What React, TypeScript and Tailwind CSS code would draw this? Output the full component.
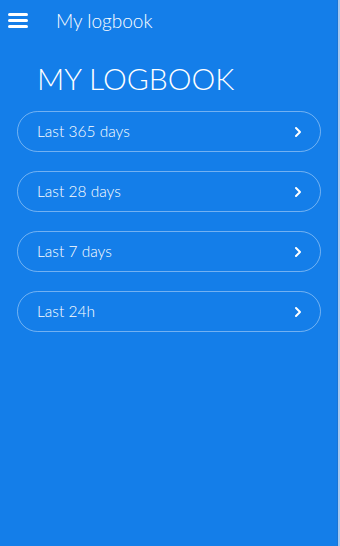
import { ChevronRight } from 'lucide-react';

const ranges = ['Last 365 days', 'Last 28 days', 'Last 7 days', 'Last 24h'];

export default function App() {
  return (
    <div
      className="flex h-[546px] w-[340px] bg-[#147ee9] text-white"
      style={{ fontFamily: 'Lato, "Open Sans", sans-serif' }}
    >
      <div className="flex flex-1 flex-col">
        {/* Top bar */}
        <div className="flex h-[40px] items-center">
          <div className="ml-[8px] flex w-[20px] flex-col gap-[3px]">
            <span className="h-[3px] w-full rounded-sm bg-white" />
            <span className="h-[3px] w-full rounded-sm bg-white" />
            <span className="h-[3px] w-full rounded-sm bg-white" />
          </div>
          <span className="ml-[28px] text-[19px] font-light leading-none">My logbook</span>
        </div>

        <h1 className="ml-[37px] mt-[23px] text-[30px] font-light leading-none">
          MY LOGBOOK
        </h1>

        {/* Range list */}
        <div className="mt-[18px] flex flex-col gap-[19px] pl-[17px] pr-[16px]">
          {ranges.map((label) => (
            <button
              key={label}
              className="flex h-[41px] items-center justify-between rounded-full border border-white/40 pl-[19px] pr-[14px] text-left"
            >
              <span className="text-[15.5px] font-light">{label}</span>
              <ChevronRight size={16} strokeWidth={3} />
            </button>
          ))}
        </div>
      </div>

      {/* right edge strip */}
      <div className="w-[1px] bg-[#1a74d4]" />
      <div className="w-[2px] bg-[#a9c9f0]" />
    </div>
  );
}
